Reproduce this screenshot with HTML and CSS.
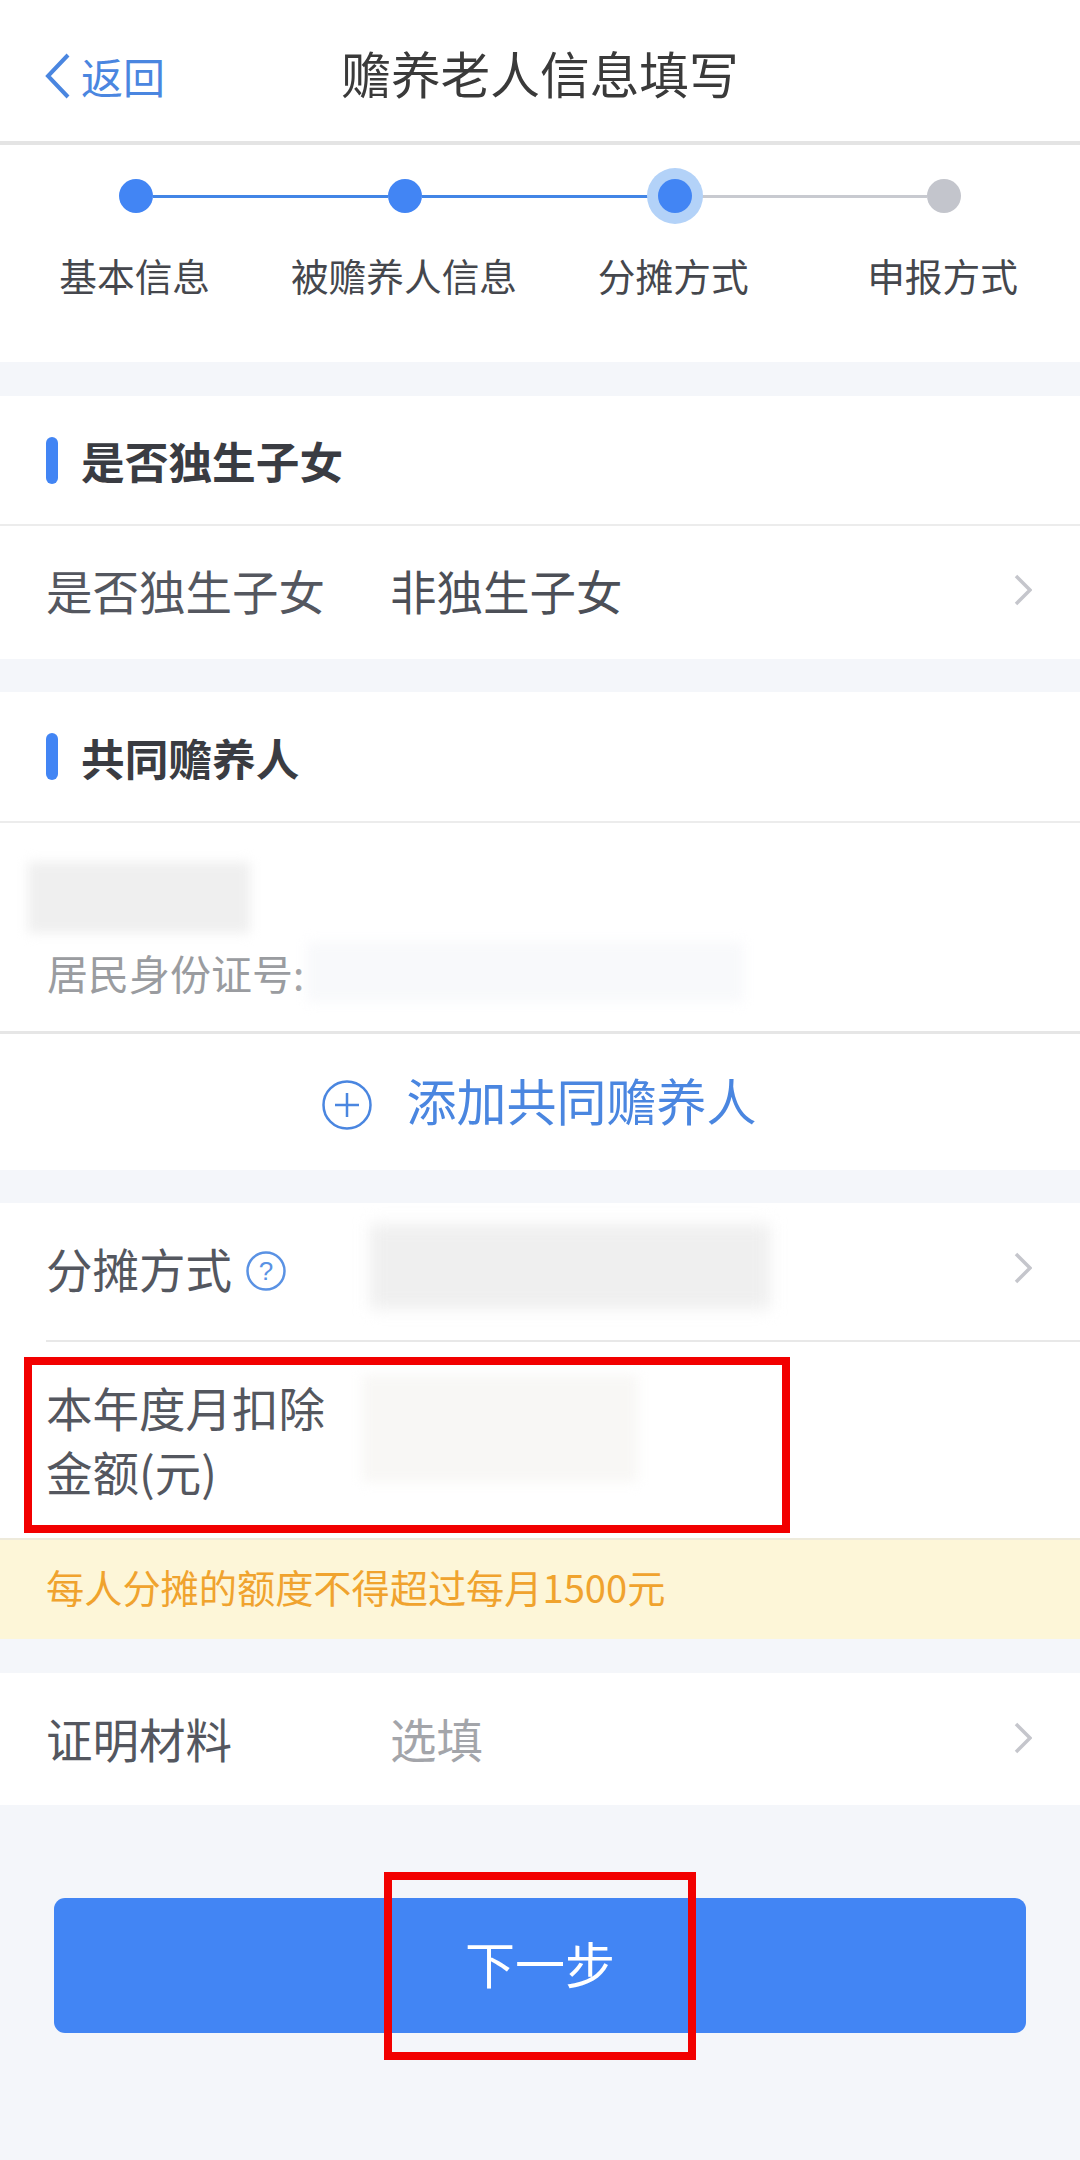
FILE: index.html
```html
<!DOCTYPE html>
<html lang="zh-CN">
<head>
<meta charset="utf-8">
<title>赡养老人信息填写</title>
<link rel="stylesheet" href="styles.css">
</head>
<body>
<div class="page">
  <header class="nav">
    <div class="back">
      <svg class="back-icon" viewBox="0 0 25 46"><path d="M23 2 L3 23 L23 44"/></svg>
      <span>返回</span>
    </div>
    <h1 class="title">赡养老人信息填写</h1>
  </header>

  <section class="steps">
    <div class="track">
      <i class="dot"></i><i class="line"></i>
      <i class="dot"></i><i class="line"></i>
      <i class="dot current"></i><i class="line off"></i>
      <i class="dot off"></i>
    </div>
    <div class="labels">
      <span>基本信息</span><span>被赡养人信息</span><span>分摊方式</span><span>申报方式</span>
    </div>
  </section>

  <section class="card gap-l">
    <div class="head h130"><i class="bar"></i>是否独生子女</div>
    <div class="row r133">
      <span class="label">是否独生子女</span>
      <span class="value">非独生子女</span>
      <svg class="chev" viewBox="0 0 18 32"><path d="M2 2 L16 16 L2 30"/></svg>
    </div>
  </section>

  <section class="card gap">
    <div class="head h131"><i class="bar"></i>共同赡养人</div>
    <div class="person">
      <div class="blur name"></div>
      <div class="idline"><span>居民身份证号:</span><div class="blur idno"></div></div>
    </div>
    <div class="add">
      <svg class="plus" viewBox="0 0 50 50"><circle cx="25" cy="25" r="23.5"/><path d="M25 13 V37 M13 25 H37"/></svg>
      <span>添加共同赡养人</span>
    </div>
  </section>

  <section class="card gap">
    <div class="row r139 inset">
      <span class="label auto">分摊方式</span>
      <svg class="help" viewBox="0 0 40 40"><circle cx="20" cy="20" r="18.5"/><text x="20" y="29" text-anchor="middle">?</text></svg>
      <div class="blur share"></div>
      <svg class="chev" viewBox="0 0 18 32"><path d="M2 2 L16 16 L2 30"/></svg>
    </div>
    <div class="amount">
      <span class="label two">本年度月扣除<br>金额(元)</span>
      <div class="blur money"></div>
      <div class="mark one"></div>
    </div>
  </section>

  <div class="notice">每人分摊的额度不得超过每月1500元</div>

  <section class="card gap-l">
    <div class="row r132">
      <span class="label">证明材料</span>
      <span class="value hint">选填</span>
      <svg class="chev" viewBox="0 0 18 32"><path d="M2 2 L16 16 L2 30"/></svg>
    </div>
  </section>

  <div class="actions">
    <button class="next">下一步</button>
    <div class="mark two-box"></div>
  </div>
</div>
</body>
</html>
```
FILE: styles.css
```css
* { box-sizing: border-box; }
html, body { margin: 0; padding: 0; }
body {
  width: 1080px;
  height: 2160px;
  overflow: hidden;
  background: #f4f6fa;
  font-family: "Noto Sans CJK SC", "Liberation Sans", sans-serif;
  color: #4c4f57;
}
.page { display: flex; flex-direction: column; height: 2160px; }

.nav {
  height: 145px;
  background: #fff;
  border-bottom: 4px solid #e4e4e4;
  display: flex;
  align-items: center;
  justify-content: center;
  position: relative;
  padding-top: 4px;
}
.title { margin: 0; font-size: 49.7px; font-weight: 400; color: #3a3a3a; line-height: 1.2; }
.back {
  position: absolute;
  left: 45px;
  top: 52px;
  display: flex;
  align-items: center;
  gap: 11px;
  font-size: 42px;
  line-height: 48px;
  color: #4a86e0;
}
.back-icon { width: 25px; height: 46px; fill: none; stroke: #4a86e0; stroke-width: 4; }

.steps { height: 217px; background: #fff; padding-top: 34px; }
.track { display: flex; align-items: center; padding: 0 119px; height: 34px; }
.dot { flex: none; width: 34px; height: 34px; border-radius: 50%; background: #4285f4; }
.dot.current { box-shadow: 0 0 0 11px #b3d2f8; position: relative; }
.dot.off { background: #c3c5cc; }
.line { flex: 1; height: 3px; background: #4285e6; }
.line.off { background: #c8cad0; }
.labels { display: grid; grid-template-columns: repeat(4, 269.3px); margin: 39px 0 0; }
.labels span { text-align: center; font-size: 37.7px; line-height: 46px; color: #45474d; }

.card { background: #fff; }
.gap { margin-top: 33px; }
.gap-l { margin-top: 34px; }
.head {
  border-bottom: 2px solid #ececec;
  display: flex;
  align-items: center;
  padding-left: 46px;
  font-size: 43.7px;
  font-weight: 700;
  color: #3a3c42;
}
.h130 { height: 130px; }
.h131 { height: 131px; }
.bar { width: 12px; height: 47px; border-radius: 6px; background: #4285f4; margin-right: 23px; }

.row { display: flex; align-items: center; padding: 0 48px 0 46px; position: relative; }
.r133 { height: 133px; padding-bottom: 6px; }
.r139 { height: 139px; padding-bottom: 9px; }
.r132 { height: 132px; padding-bottom: 3px; }
.inset::after {
  content: "";
  position: absolute;
  left: 46px;
  right: 0;
  bottom: 0;
  height: 2px;
  background: #e8e8e8;
}
.label { width: 344px; flex: none; font-size: 46.5px; line-height: 64px; color: #54575f; }
.label.auto { width: auto; }
.value { font-size: 46.5px; line-height: 64px; color: #4c4f57; flex: 1; }
.value.hint { color: #a3a5aa; }
.chev { width: 18px; height: 32px; margin-left: auto; fill: none; stroke: #c5c6cc; stroke-width: 3.5; }

.blur { filter: blur(6px); flex: none; }
.person { height: 211px; border-bottom: 3px solid #e6e6e6; padding: 39px 0 0 28px; }
.name { width: 222px; height: 71px; background: #efefef; }
.idline { display: flex; align-items: center; margin-top: 8px; padding-left: 19px; height: 62px; font-size: 41px; color: #9a9ca0; }
.idno { width: 438px; height: 60px; background: #f8f9fb; margin-left: 2px; }

.add { height: 136px; display: flex; align-items: center; justify-content: center; gap: 35px; font-size: 50px; color: #4a86e0; padding-right: 2px; padding-top: 6px; }
.add span { margin-top: -12px; }
.plus { width: 50px; height: 50px; fill: none; stroke: #4a86e0; stroke-width: 2.5; }

.help { width: 40px; height: 40px; margin-left: 14px; margin-top: 6px; fill: none; stroke: #5a92e4; stroke-width: 2.5; }
.help text { fill: #5a92e4; stroke: none; font-size: 26px; font-family: "Liberation Sans", sans-serif; }
.share { width: 400px; height: 85px; background: #efefef; margin-left: 84px; margin-top: -3px; filter: blur(8px); }

.amount { height: 196px; display: flex; align-items: flex-start; padding: 33px 0 0 46px; position: relative; }
.label.two { width: 316px; }
.money { width: 276px; height: 107px; background: #f8f7f5; }
.mark { position: absolute; border: 8px solid #f20000; }
.mark.one { left: 24px; top: 15px; width: 766px; height: 176px; }

.notice {
  height: 101px;
  background: #fdf6d8;
  border-top: 2px solid #eeeadb;
  display: flex;
  align-items: center;
  padding: 0 0 6px 46px;
  font-size: 38.2px;
  color: #f0a32e;
}

.actions { position: relative; padding: 93px 54px 0; }
.next {
  display: block;
  width: 100%;
  height: 135px;
  border: 0;
  border-radius: 11px;
  background: #4285f4;
  color: #fff;
  font: inherit;
  font-size: 50px;
  padding-bottom: 8px;
}
.mark.two-box { left: 384px; top: 67px; width: 312px; height: 188px; }
```
